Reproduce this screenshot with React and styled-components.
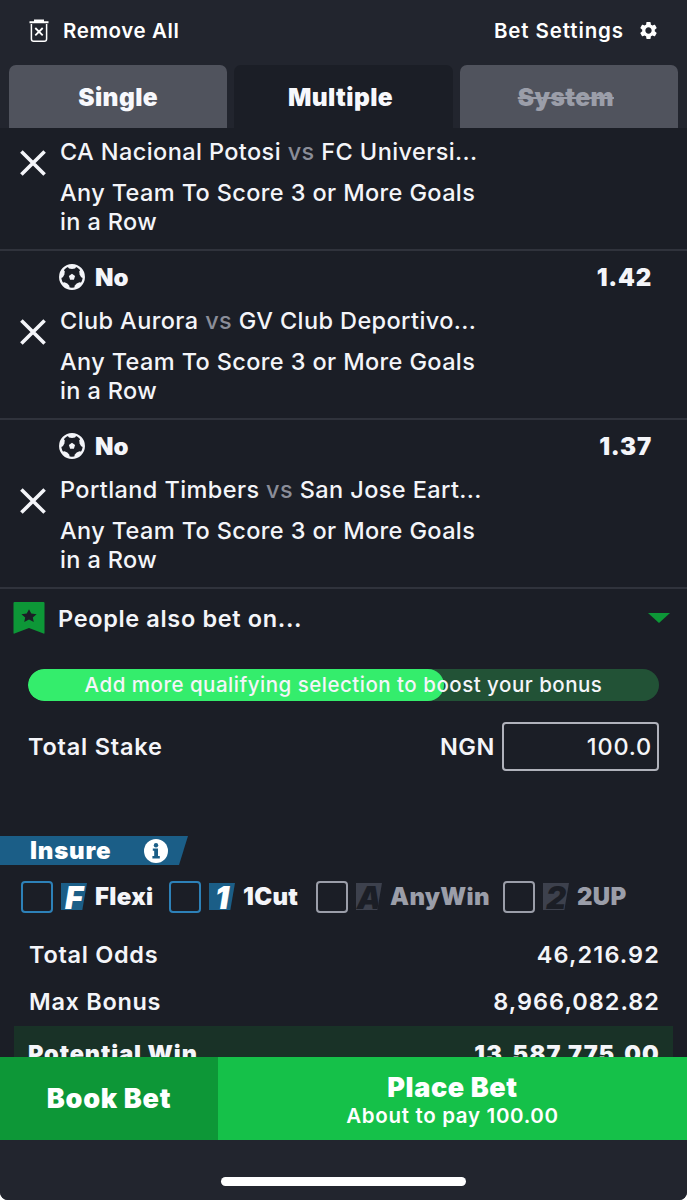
import styled, { createGlobalStyle } from "styled-components";
import { MdSettings } from "react-icons/md";

const selections = [
  { id: 1, home: "CA Nacional Potosi", away: "FC Universi..." },
  { id: 2, pick: "No", odds: "1.42", home: "Club Aurora", away: "GV Club Deportivo..." },
  { id: 3, pick: "No", odds: "1.37", home: "Portland Timbers", away: "San Jose Eart..." },
];

const insurance = [
  { name: "Flexi", mark: "F", active: true, width: 148 },
  { name: "1Cut", mark: "1", active: true, width: 147 },
  { name: "AnyWin", mark: "A", width: 187 },
  { name: "2UP", mark: "2", width: 140 },
];

const TrashIcon = () => (
  <svg width="20" height="24" viewBox="0 0 20 24" fill="none" stroke="#fff">
    <path d="M0.5 3.2H19.5M5 1.5H15" strokeWidth="2" />
    <path d="M2.4 5V20Q2.4 22.3 4.7 22.3H15.3Q17.6 22.3 17.6 20V5" strokeWidth="1.5" />
    <path d="M6.3 9L13.7 16.4M13.7 9L6.3 16.4" strokeWidth="1.8" />
  </svg>
);

const BallIcon = () => (
  <svg width="26" height="26" viewBox="0 0 26 26">
    <circle cx="13" cy="13" r="11.8" fill="none" stroke="#f4f5f9" strokeWidth="2.3" />
    {[0, 72, 144, 216, 288].map((angle) => (
      <path
        key={angle}
        d="M7.8 1.8Q13 0.2 18.2 1.8L16 4.4L13 5L10 4.4Z"
        fill="#f4f5f9"
        transform={`rotate(${angle} 13 13)`}
      />
    ))}
    <path d="M13 9.8L16.1 12.1L14.9 15.7H11.1L9.9 12.1Z" fill="#f4f5f9" />
  </svg>
);

const CloseIcon = () => (
  <svg width="26" height="26" viewBox="0 0 26 26" stroke="#f4f5f9" strokeWidth="3.6">
    <path d="M1.4 1.4L24.6 24.6M24.6 1.4L1.4 24.6" />
  </svg>
);

const BookmarkIcon = () => (
  <svg width="32" height="32" viewBox="0 0 32 32">
    <path d="M1.5 0H30.5Q31.5 0 31.5 1V31Q31.5 32 30.5 31.6L16 26L1.5 31.6Q0.5 32 0.5 31V1Q0.5 0 1.5 0Z" fill="#0d9737" />
    <path d="M16 7.2L18.3 11.6L23.6 12.2L19.8 15.5L20.8 20L16 17.6L11.2 20L12.2 15.5L8.4 12.2L13.7 11.6Z" fill="#1b1e26" />
  </svg>
);

const InfoIcon = () => (
  <svg width="24" height="24" viewBox="0 0 24 24">
    <circle cx="12" cy="12" r="12" fill="#fff" />
    <circle cx="12" cy="6.2" r="2.2" fill="#1b5e87" />
    <path d="M8.8 9.4H14V17H15.8V19.4H8.4V17H10.2V11.8H8.8Z" fill="#1b5e87" />
  </svg>
);

const App = () => (
  <>
    <GlobalStyle />
    <Screen>
      <Header>
        <TopBar>
          <TopAction>
            <TrashIcon />
            <Label $size={20.5} $space={0.6}>Remove All</Label>
          </TopAction>
          <TopAction>
            <Label $size={20.5} $space={0.9}>Bet Settings</Label>
            <MdSettings size={21} />
          </TopAction>
        </TopBar>
        <Tabs>
          <Tab>Single</Tab>
          <Tab $active $inset={6}>Multiple</Tab>
          <Tab $disabled $inset={6}>System</Tab>
        </Tabs>
      </Header>

      <Content>
        {selections.map((item) => (
          <Selection key={item.id}>
            {item.pick && (
              <PickRow>
                <BallIcon />
                <Pick>{item.pick}</Pick>
                <Odds>{item.odds}</Odds>
              </PickRow>
            )}
            <MatchRow>
              <RemoveButton aria-label="Remove">
                <CloseIcon />
              </RemoveButton>
              <div>
                <Teams>
                  {item.home} <span>vs</span> {item.away}
                </Teams>
                <Market>
                  Any Team To Score 3 or More Goals
                  <br />
                  in a Row
                </Market>
              </div>
            </MatchRow>
          </Selection>
        ))}

        <AlsoBet>
          <BookmarkIcon />
          <Label $space={0.65}>People also bet on...</Label>
          <Caret />
        </AlsoBet>

        <BoostBar>
          <BoostFill />
          <BoostText>Add more qualifying selection to boost your bonus</BoostText>
        </BoostBar>

        <StakeRow>
          <Label $space={0.8}>Total Stake</Label>
          <Currency>NGN</Currency>
          <StakeBox>100.0</StakeBox>
        </StakeRow>

        <InsureTag>
          <span>Insure</span>
          <InfoIcon />
        </InsureTag>
        <InsureRow>
          {insurance.map((option) => (
            <Option key={option.name} $active={option.active} $width={option.width}>
              <Checkbox $active={option.active} />
              <Mark $active={option.active}>{option.mark}</Mark>
              {option.name}
            </Option>
          ))}
        </InsureRow>

        <Total>
          <Label $space={0.7}>Total Odds</Label>
          <Label $space={1.1}>46,216.92</Label>
        </Total>
        <Total>
          <Label $space={0.7}>Max Bonus</Label>
          <Label $space={1}>8,966,082.82</Label>
        </Total>
        <WinTotal>
          <span>Potential Win</span>
          <span>13,587,775.00</span>
        </WinTotal>
      </Content>

      <Actions>
        <BookButton>Book Bet</BookButton>
        <PlaceButton>
          Place Bet
          <small>About to pay 100.00</small>
        </PlaceButton>
      </Actions>
      <HomeArea>
        <HomeIndicator />
      </HomeArea>
    </Screen>
  </>
);

export default App;

const GlobalStyle = createGlobalStyle`
  * {
    box-sizing: border-box;
  }

  body {
    margin: 0;
    background: #fff;
    font-family: Inter, "Liberation Sans", sans-serif;
  }

  svg {
    display: block;
    flex-shrink: 0;
  }

  button {
    font-family: inherit;
    border: none;
    padding: 0;
    color: inherit;
  }
`;

const Screen = styled.div`
  display: flex;
  flex-direction: column;
  width: 687px;
  height: 1200px;
  overflow: hidden;
  background: #1b1e26;
  color: #f4f5f9;
  border-radius: 0 0 8px 8px;
`;

const Header = styled.header`
  height: 128px;
  background: #22252e;
`;

const TopBar = styled.div`
  display: flex;
  justify-content: space-between;
  align-items: center;
  height: 65px;
  padding: 0 28px 4px 29px;
  color: #fff;
`;

const TopAction = styled.div`
  display: flex;
  align-items: center;
  gap: 14px;
`;

const Label = styled.span`
  font-size: ${({ $size = 23.5 }) => $size}px;
  font-weight: 600;
  letter-spacing: ${({ $space }) => $space}px;
  white-space: nowrap;
`;

const Tabs = styled.div`
  display: grid;
  grid-template-columns: repeat(3, 1fr);
  gap: 7px;
  padding: 0 9px;
`;

const Tab = styled.button`
  height: 63px;
  padding-right: ${({ $inset = 0 }) => $inset}px;
  border-radius: 7px 7px 0 0;
  background: ${({ $active }) => ($active ? "#1b1e26" : "#50535d")};
  color: ${({ $disabled }) => ($disabled ? "#9b9ea9" : "#f7f8fc")};
  font-size: 24.5px;
  font-weight: 900;
  letter-spacing: 0.4px;
  text-decoration: ${({ $disabled }) => ($disabled ? "line-through" : "none")};
`;

const Content = styled.main`
  height: 929px;
  overflow: hidden;
`;

const Selection = styled.section`
  border-bottom: 2px solid #30333c;
`;

const PickRow = styled.div`
  display: flex;
  align-items: center;
  height: 54px;
  padding: 0 35px 2px 59px;
  font-size: 24px;
  font-weight: 900;
`;

const Pick = styled.span`
  margin-left: 10px;
`;

const Odds = styled.span`
  margin-left: auto;
  letter-spacing: 0.8px;
`;

const MatchRow = styled.div`
  display: flex;
  align-items: flex-start;
  height: 113px;

  ${Selection}:first-child & {
    height: 121px;
    padding-top: 8px;
  }
`;

const RemoveButton = styled.button`
  width: 60px;
  padding: 14px 0 0 20px;
  background: none;
`;

const Teams = styled.div`
  height: 34px;
  line-height: 32px;
  font-size: 23.5px;
  font-weight: 500;
  letter-spacing: 0.4px;

  span {
    color: #8a8d98;
  }
`;

const Market = styled.div`
  padding-top: 8px;
  line-height: 29px;
  font-size: 23.5px;
  font-weight: 500;
  letter-spacing: 0.38px;
`;

const AlsoBet = styled.div`
  display: flex;
  align-items: center;
  gap: 13px;
  height: 60px;
  padding: 0 17px 2px 13px;
`;

const Caret = styled.i`
  margin-left: auto;
  border: 11px solid transparent;
  border-top: 10px solid #0d9737;
  border-bottom: 0;
`;

const BoostBar = styled.div`
  position: relative;
  height: 32px;
  margin: 20px 28px 0;
  border-radius: 16px;
  background: #225236;
  overflow: hidden;
`;

const BoostFill = styled.div`
  width: 416px;
  height: 100%;
  border-radius: 16px;
  background: #34ed6c;
`;

const BoostText = styled.div`
  position: absolute;
  inset: 0;
  line-height: 32px;
  text-align: center;
  font-size: 20.5px;
  font-weight: 500;
  letter-spacing: 0.5px;
`;

const StakeRow = styled.div`
  display: flex;
  align-items: center;
  height: 50px;
  margin: 20px 28px 0;
`;

const Currency = styled.span`
  margin: 0 7px 0 auto;
  font-size: 23.5px;
  font-weight: 600;
  letter-spacing: 0.6px;
`;

const StakeBox = styled.div`
  width: 157px;
  height: 49px;
  padding-right: 5px;
  border: 2px solid #b0b2bb;
  border-radius: 4px;
  line-height: 45px;
  text-align: right;
  font-size: 23.5px;
  font-weight: 500;
  letter-spacing: 0.8px;
`;

const InsureTag = styled.div`
  display: flex;
  align-items: center;
  justify-content: space-between;
  width: 188px;
  height: 29px;
  margin-top: 65px;
  padding: 0 20px 0 30px;
  background: #1b5e87;
  clip-path: polygon(0 0, 100% 0, 179px 100%, 0 100%);
  color: #fff;
  font-size: 24px;
  font-weight: 900;
  letter-spacing: 0.8px;
`;

const InsureRow = styled.div`
  display: flex;
  align-items: center;
  height: 63px;
  padding-left: 21px;
`;

const Option = styled.div`
  display: flex;
  align-items: center;
  width: ${({ $width }) => $width}px;
  color: ${({ $active }) => ($active ? "#f4f5f9" : "#9b9ea9")};
  font-size: 24px;
  font-weight: 900;
  letter-spacing: 0.3px;
  white-space: nowrap;
`;

const Checkbox = styled.i`
  width: 32px;
  height: 32px;
  border: 2px solid ${({ $active }) => ($active ? "#2d81b8" : "#9b9ea9")};
  border-radius: 4px;
`;

const Mark = styled.b`
  display: flex;
  justify-content: center;
  width: 26px;
  height: 27px;
  margin: 0 8px;
  background: ${({ $active }) => ($active ? "#1b5e87" : "#3d414d")};
  clip-path: polygon(0 0, 100% 0, 82% 100%, 0 100%);
  color: ${({ $active }) => ($active ? "#fff" : "#1b1e26")};
  font-size: 31px;
  font-style: italic;
  font-weight: 900;
  letter-spacing: 0;
  line-height: 30px;
`;

const Total = styled.div`
  display: flex;
  align-items: center;
  justify-content: space-between;
  height: 47px;
  padding: 0 27px 0 29px;

  ${InsureRow} + & {
    margin-top: 3px;
  }
`;

const WinTotal = styled.div`
  display: flex;
  justify-content: space-between;
  height: 60px;
  margin: 1px 14px 0;
  padding: 12px 13px 12px 14px;
  background: #193227;
  line-height: 32px;
  font-size: 23.5px;
  font-weight: 900;
  letter-spacing: 0.9px;

  span:last-child {
    letter-spacing: 1.2px;
  }
`;

const Actions = styled.div`
  display: flex;
  height: 83px;
  color: #fff;
`;

const BookButton = styled.button`
  width: 218px;
  background: #0d9737;
  font-size: 27px;
  font-weight: 900;
  letter-spacing: 0.7px;
`;

const PlaceButton = styled.button`
  display: flex;
  flex: 1;
  flex-direction: column;
  align-items: center;
  justify-content: center;
  padding-top: 4px;
  background: #15c149;
  font-size: 27px;
  font-weight: 900;
  letter-spacing: 0.6px;
  line-height: 30px;

  small {
    font-size: 20.5px;
    font-weight: 600;
    letter-spacing: 0.68px;
    line-height: 26px;
  }
`;

const HomeArea = styled.footer`
  display: flex;
  justify-content: center;
  height: 60px;
  padding-top: 37px;
  background: #22252e;
`;

const HomeIndicator = styled.div`
  width: 245px;
  height: 9px;
  border-radius: 5px;
  background: #fff;
`;
